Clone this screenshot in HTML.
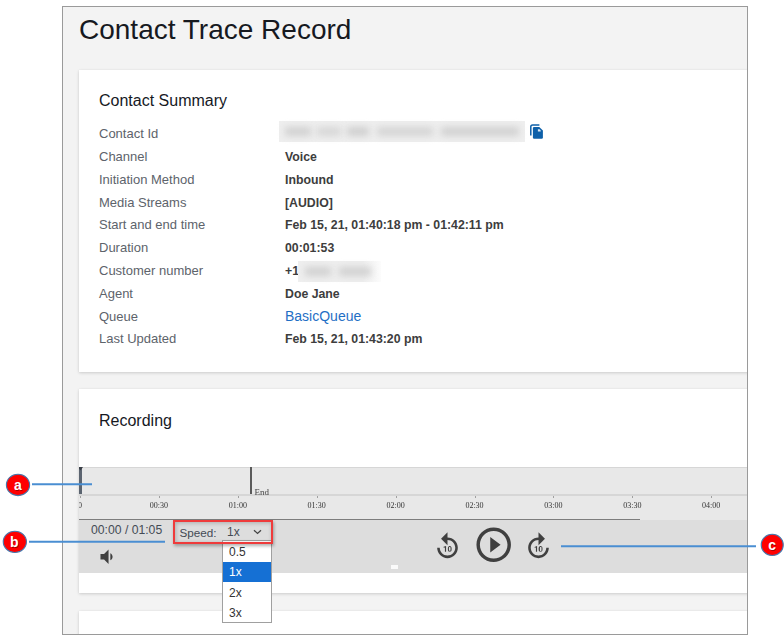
<!DOCTYPE html>
<html>
<head>
<meta charset="utf-8">
<style>
html,body{margin:0;padding:0;background:#fff;width:784px;height:637px;overflow:hidden;position:relative;font-family:"Liberation Sans",sans-serif;}
.abs{position:absolute;}
#frame{position:absolute;left:62px;top:6px;width:684px;height:627px;border:1px solid #9a9a9a;background:#f3f3f3;overflow:hidden;}
.card{position:absolute;left:16px;width:700px;background:#fff;box-shadow:0 1px 3px rgba(0,0,0,0.16),0 0 1px rgba(0,0,0,0.06);}
.title{position:absolute;left:16px;top:6.5px;font-size:28px;color:#16191f;white-space:nowrap;}
.h2{position:absolute;font-size:16px;color:#16191f;white-space:nowrap;}
.lbl{position:absolute;left:20px;font-size:13px;color:#5d636b;white-space:nowrap;}
.val{position:absolute;left:206px;font-size:12.3px;font-weight:bold;color:#3d3d3d;white-space:nowrap;}
.tl{position:absolute;font-family:"Liberation Serif",serif;font-size:8px;color:#333;white-space:nowrap;filter:blur(0.4px);}
.tick{position:absolute;width:1px;height:2px;background:#a0a0a0;}
</style>
</head>
<body>
<div id="frame">
  <div class="title">Contact Trace Record</div>

  <!-- card 1 -->
  <div class="card" style="top:63px;height:302px;">
    <div class="h2" style="left:20px;top:22px;">Contact Summary</div>
    <div class="lbl" style="top:56px;">Contact Id</div>
    <div class="lbl" style="top:79px;">Channel</div>
    <div class="lbl" style="top:102px;">Initiation Method</div>
    <div class="lbl" style="top:125px;">Media Streams</div>
    <div class="lbl" style="top:147px;">Start and end time</div>
    <div class="lbl" style="top:170px;">Duration</div>
    <div class="lbl" style="top:193px;">Customer number</div>
    <div class="lbl" style="top:216px;">Agent</div>
    <div class="lbl" style="top:239px;">Queue</div>
    <div class="lbl" style="top:261px;">Last Updated</div>

    <div class="abs" style="left:200px;top:51px;width:246px;height:21px;background:#efefef;"></div>
    <div class="abs" style="left:206px;top:57px;width:26px;height:9px;background:#d0d0d0;filter:blur(3.5px);"></div>
    <div class="abs" style="left:238px;top:57px;width:24px;height:9px;background:#d6d6d6;filter:blur(3.5px);"></div>
    <div class="abs" style="left:268px;top:57px;width:22px;height:9px;background:#cecece;filter:blur(3.5px);"></div>
    <div class="abs" style="left:298px;top:57px;width:56px;height:9px;background:#d4d4d4;filter:blur(3.5px);"></div>
    <div class="abs" style="left:362px;top:57px;width:78px;height:9px;background:#d0d0d0;filter:blur(3.5px);"></div>
    <svg class="abs" style="left:450px;top:53px;" width="16" height="18" viewBox="0 0 16 18"><path d="M1.8 12.4V3.7Q1.8 1.9 3.6 1.9H10.4" fill="none" stroke="#0e60a9" stroke-width="1.5"/><path d="M5.1 3.9H10.3L13.9 7.5V14.6Q13.9 15.8 12.7 15.8H5.1Q3.9 15.8 3.9 14.6V5.1Q3.9 3.9 5.1 3.9Z" fill="#0e60a9"/><path d="M8.9 6.3H10.6L11.7 7.4V8.6H8.9Z" fill="#fff" opacity="0.85"/></svg>
    <div class="val" style="top:80px;">Voice</div>
    <div class="val" style="top:103px;">Inbound</div>
    <div class="val" style="top:126px;">[AUDIO]</div>
    <div class="val" style="top:148px;">Feb 15, 21, 01:40:18 pm - 01:42:11 pm</div>
    <div class="val" style="top:171px;">00:01:53</div>
    <div class="val" style="top:194px;">+1</div>
    <div class="abs" style="left:219px;top:191px;width:83px;height:21px;background:linear-gradient(90deg,#efefef 0,#efefef 78%,#fcfcfc 100%);"></div>
    <div class="abs" style="left:226px;top:197px;width:26px;height:9px;background:#d0d0d0;filter:blur(3.5px);"></div>
    <div class="abs" style="left:260px;top:197px;width:32px;height:9px;background:#d0d0d0;filter:blur(3.5px);"></div>
    <div class="val" style="top:217px;">Doe Jane</div>
    <div class="val" style="top:238px;font-weight:normal;font-size:14px;color:#1f6fc5;">BasicQueue</div>
    <div class="val" style="top:262px;">Feb 15, 21, 01:43:20 pm</div>
  </div>

  <!-- card 2 -->
  <div class="card" style="top:382px;height:204px;overflow:hidden;">
    <div class="h2" style="left:20px;top:23px;">Recording</div>
    <div class="abs" style="left:0;top:78px;width:700px;height:52px;background:#e8e8e8;border-top:1px solid #d6d6d6;"></div>
    <div class="abs" style="left:0;top:105px;width:700px;height:2px;background:#d6d6d6;"></div>
    <!-- playhead -->
    <div class="abs" style="left:0;top:78px;width:3px;height:27px;background:#5b6470;"></div>
    <svg class="abs" style="left:-1px;top:78px;" width="5" height="4" viewBox="0 0 5 4"><path d="M0 0H5L2.5 3.5z" fill="#3a3f47"/></svg>
    <!-- end marker -->
    <div class="abs" style="left:171px;top:78px;width:2px;height:27px;background:#5a5a5a;"></div>
    <div class="tl" style="left:175.5px;top:98px;font-size:9px;color:#444;">End</div>
    <div class="tick" style="left:1.0px;top:107px;"></div>
    <div class="tl" style="left:-19.0px;width:40px;text-align:center;top:112px;font-size:8px;">0</div>
    <div class="tick" style="left:79.9px;top:107px;"></div>
    <div class="tl" style="left:59.9px;width:40px;text-align:center;top:112px;font-size:8px;">00:30</div>
    <div class="tick" style="left:158.8px;top:107px;"></div>
    <div class="tl" style="left:138.8px;width:40px;text-align:center;top:112px;font-size:8px;">01:00</div>
    <div class="tick" style="left:237.7px;top:107px;"></div>
    <div class="tl" style="left:217.7px;width:40px;text-align:center;top:112px;font-size:8px;">01:30</div>
    <div class="tick" style="left:316.6px;top:107px;"></div>
    <div class="tl" style="left:296.6px;width:40px;text-align:center;top:112px;font-size:8px;">02:00</div>
    <div class="tick" style="left:395.5px;top:107px;"></div>
    <div class="tl" style="left:375.5px;width:40px;text-align:center;top:112px;font-size:8px;">02:30</div>
    <div class="tick" style="left:474.4px;top:107px;"></div>
    <div class="tl" style="left:454.4px;width:40px;text-align:center;top:112px;font-size:8px;">03:00</div>
    <div class="tick" style="left:553.3px;top:107px;"></div>
    <div class="tl" style="left:533.3px;width:40px;text-align:center;top:112px;font-size:8px;">03:30</div>
    <div class="tick" style="left:632.2px;top:107px;"></div>
    <div class="tl" style="left:612.2px;width:40px;text-align:center;top:112px;font-size:8px;">04:00</div>
    <!-- progress track -->
    <div class="abs" style="left:0;top:130px;width:561px;height:1px;background:#7d7d7d;"></div>
    <!-- controls -->
    <div class="abs" style="left:0;top:131px;width:700px;height:53px;background:#dddddd;"></div>
    <div class="abs" style="left:12px;top:134px;font-size:12.2px;color:#444b55;white-space:nowrap;">00:00 / 01:05</div>
    <svg class="abs" style="left:17px;top:157px;" width="21.5" height="21.5" viewBox="0 0 24 24"><path fill="#404040" d="M18.5 12c0-1.77-1.02-3.29-2.5-4.03v8.05c1.48-.73 2.5-2.25 2.5-4.02zM5 9v6h4l5 5V4L9 9H5z"/></svg>
    <!-- speed -->
    <div class="abs" style="left:100.5px;top:136.5px;font-size:11.7px;color:#444b55;white-space:nowrap;">Speed:</div>
    <div class="abs" style="left:148px;top:136px;font-size:12px;color:#444b55;white-space:nowrap;">1x</div>
    <svg class="abs" style="left:174px;top:140px;" width="9" height="6" viewBox="0 0 9 6"><path d="M1 1.2L4.5 4.4L8 1.2" fill="none" stroke="#444" stroke-width="1.3"/></svg>
    <!-- icons -->
    <svg class="abs" style="left:353px;top:142px;" width="31" height="31" viewBox="0 0 24 24"><path fill="#404040" d="M12 5V1L7 6l5 5V7c3.31 0 6 2.69 6 6s-2.69 6-6 6-6-2.69-6-6H4c0 4.42 3.58 8 8 8s8-3.58 8-8-3.58-8-8-8zm-1.1 11H10v-3.26L9 13v-.74l1.8-.66h.1V16zm4.28-1.76c0 .32-.03.6-.1.82s-.17.42-.29.57-.28.26-.45.33-.37.1-.59.1-.41-.03-.59-.1-.33-.18-.46-.33-.23-.34-.3-.57-.11-.5-.11-.82v-.74c0-.32.03-.6.1-.82s.17-.42.29-.57.28-.26.45-.33.37-.1.59-.1.41.03.59.1.33.18.46.33.23.34.3.57.11.5.11.82v.74zm-.85-.86c0-.19-.01-.35-.04-.48s-.07-.23-.12-.31-.11-.14-.19-.17-.16-.05-.25-.05-.18.02-.25.05-.14.09-.19.17-.09.18-.12.31-.04.29-.04.48v.97c0 .19.01.35.04.48s.07.24.12.32.11.14.19.17.16.05.25.05.18-.02.25-.05.14-.09.19-.17.09-.19.11-.32.04-.29.04-.48v-.97z"/></svg>
    <svg class="abs" style="left:394px;top:135.3px;" width="41.4" height="41.4" viewBox="0 0 24 24"><path fill="#404040" d="M10 16.5l6-4.5-6-4.5v9zM12 2C6.48 2 2 6.48 2 12s4.48 10 10 10 10-4.48 10-10S17.52 2 12 2zm0 18c-4.41 0-8-3.59-8-8s3.59-8 8-8 8 3.59 8 8-3.59 8-8 8z"/></svg>
    <svg class="abs" style="left:444px;top:142px;" width="31" height="31" viewBox="0 0 24 24"><path fill="#404040" d="M4 13c0 4.4 3.6 8 8 8s8-3.6 8-8h-2c0 3.3-2.7 6-6 6s-6-2.7-6-6 2.7-6 6-6v4l5-5-5-5v4c-4.4 0-8 3.6-8 8zm6.8 3H10v-3.3L9 13v-.7l1.8-.6h.1V16zm4.3-1.8c0 .3 0 .6-.1.8l-.3.6s-.3.3-.5.3-.4.1-.6.1-.4 0-.6-.1-.3-.2-.5-.3-.2-.3-.3-.6-.1-.5-.1-.8v-.7c0-.3 0-.6.1-.8l.3-.6s.3-.3.5-.3.4-.1.6-.1.4 0 .6.1.3.2.5.3.2.3.3.6.1.5.1.8v.7zm-.8-.8v-.5s-.1-.2-.1-.3-.1-.1-.2-.2-.2-.1-.3-.1-.2 0-.3.1l-.2.2s-.1.2-.1.3v2s.1.2.1.3.1.1.2.2.2.1.3.1.2 0 .3-.1l.2-.2s.1-.2.1-.3v-1.5z"/></svg>
    <div class="abs" style="left:312px;top:176px;width:7px;height:4px;background:#fafafa;filter:blur(0.6px);"></div>
  </div>

  <!-- card 3 -->
  <div class="card" style="top:603.5px;height:100px;"></div>
</div>

<!-- callouts -->
<svg class="abs" style="left:0;top:0;" width="784" height="637">
  <g stroke="#4a8ed2" stroke-width="2">
    <line x1="32" y1="484.2" x2="92" y2="484.2"/>
    <line x1="29" y1="541.8" x2="165" y2="541.8"/>
    <line x1="561" y1="546.2" x2="756" y2="546.2"/>
  </g>
  <g fill="#ff0000" stroke="#4678ad" stroke-width="1.1">
    <ellipse cx="18" cy="484.9" rx="11.6" ry="10.7"/>
    <ellipse cx="14.85" cy="541.85" rx="11.6" ry="10.6"/>
    <ellipse cx="772.25" cy="544.9" rx="11.0" ry="10.6"/>
  </g>
  <g fill="#8a0000" font-family="Liberation Sans" font-weight="bold" font-size="14" text-anchor="middle" opacity="0.8">
    <text x="18.6" y="490.8">a</text>
    <text x="15.2" y="547.8">b</text>
    <text x="772.9" y="550.8">c</text>
  </g>
  <g fill="#fff" font-family="Liberation Sans" font-weight="bold" font-size="14" text-anchor="middle">
    <text x="17.8" y="490">a</text>
    <text x="14.4" y="547">b</text>
    <text x="772.1" y="550">c</text>
  </g>
</svg>
<!-- dropdown -->
<div class="abs" style="left:222px;top:540px;width:48px;height:81px;border:1px solid #a0a0a0;background:#fff;">
  <div class="abs" style="left:6px;top:4px;font-size:12px;color:#333;">0.5</div>
  <div class="abs" style="left:0;top:21px;width:48px;height:20px;background:#1570d4;"></div>
  <div class="abs" style="left:6px;top:24px;font-size:12px;color:#fff;">1x</div>
  <div class="abs" style="left:6px;top:45px;font-size:12px;color:#333;">2x</div>
  <div class="abs" style="left:6px;top:65px;font-size:12px;color:#333;">3x</div>
</div>
<!-- speed highlight box -->
<div class="abs" style="left:173px;top:520px;width:96px;height:20px;border:2px solid #ef3b3b;box-shadow:1px 2px 3px rgba(0,0,0,0.3), inset 1px 1px 4px rgba(0,0,0,0.22);"></div>
</body>
</html>
